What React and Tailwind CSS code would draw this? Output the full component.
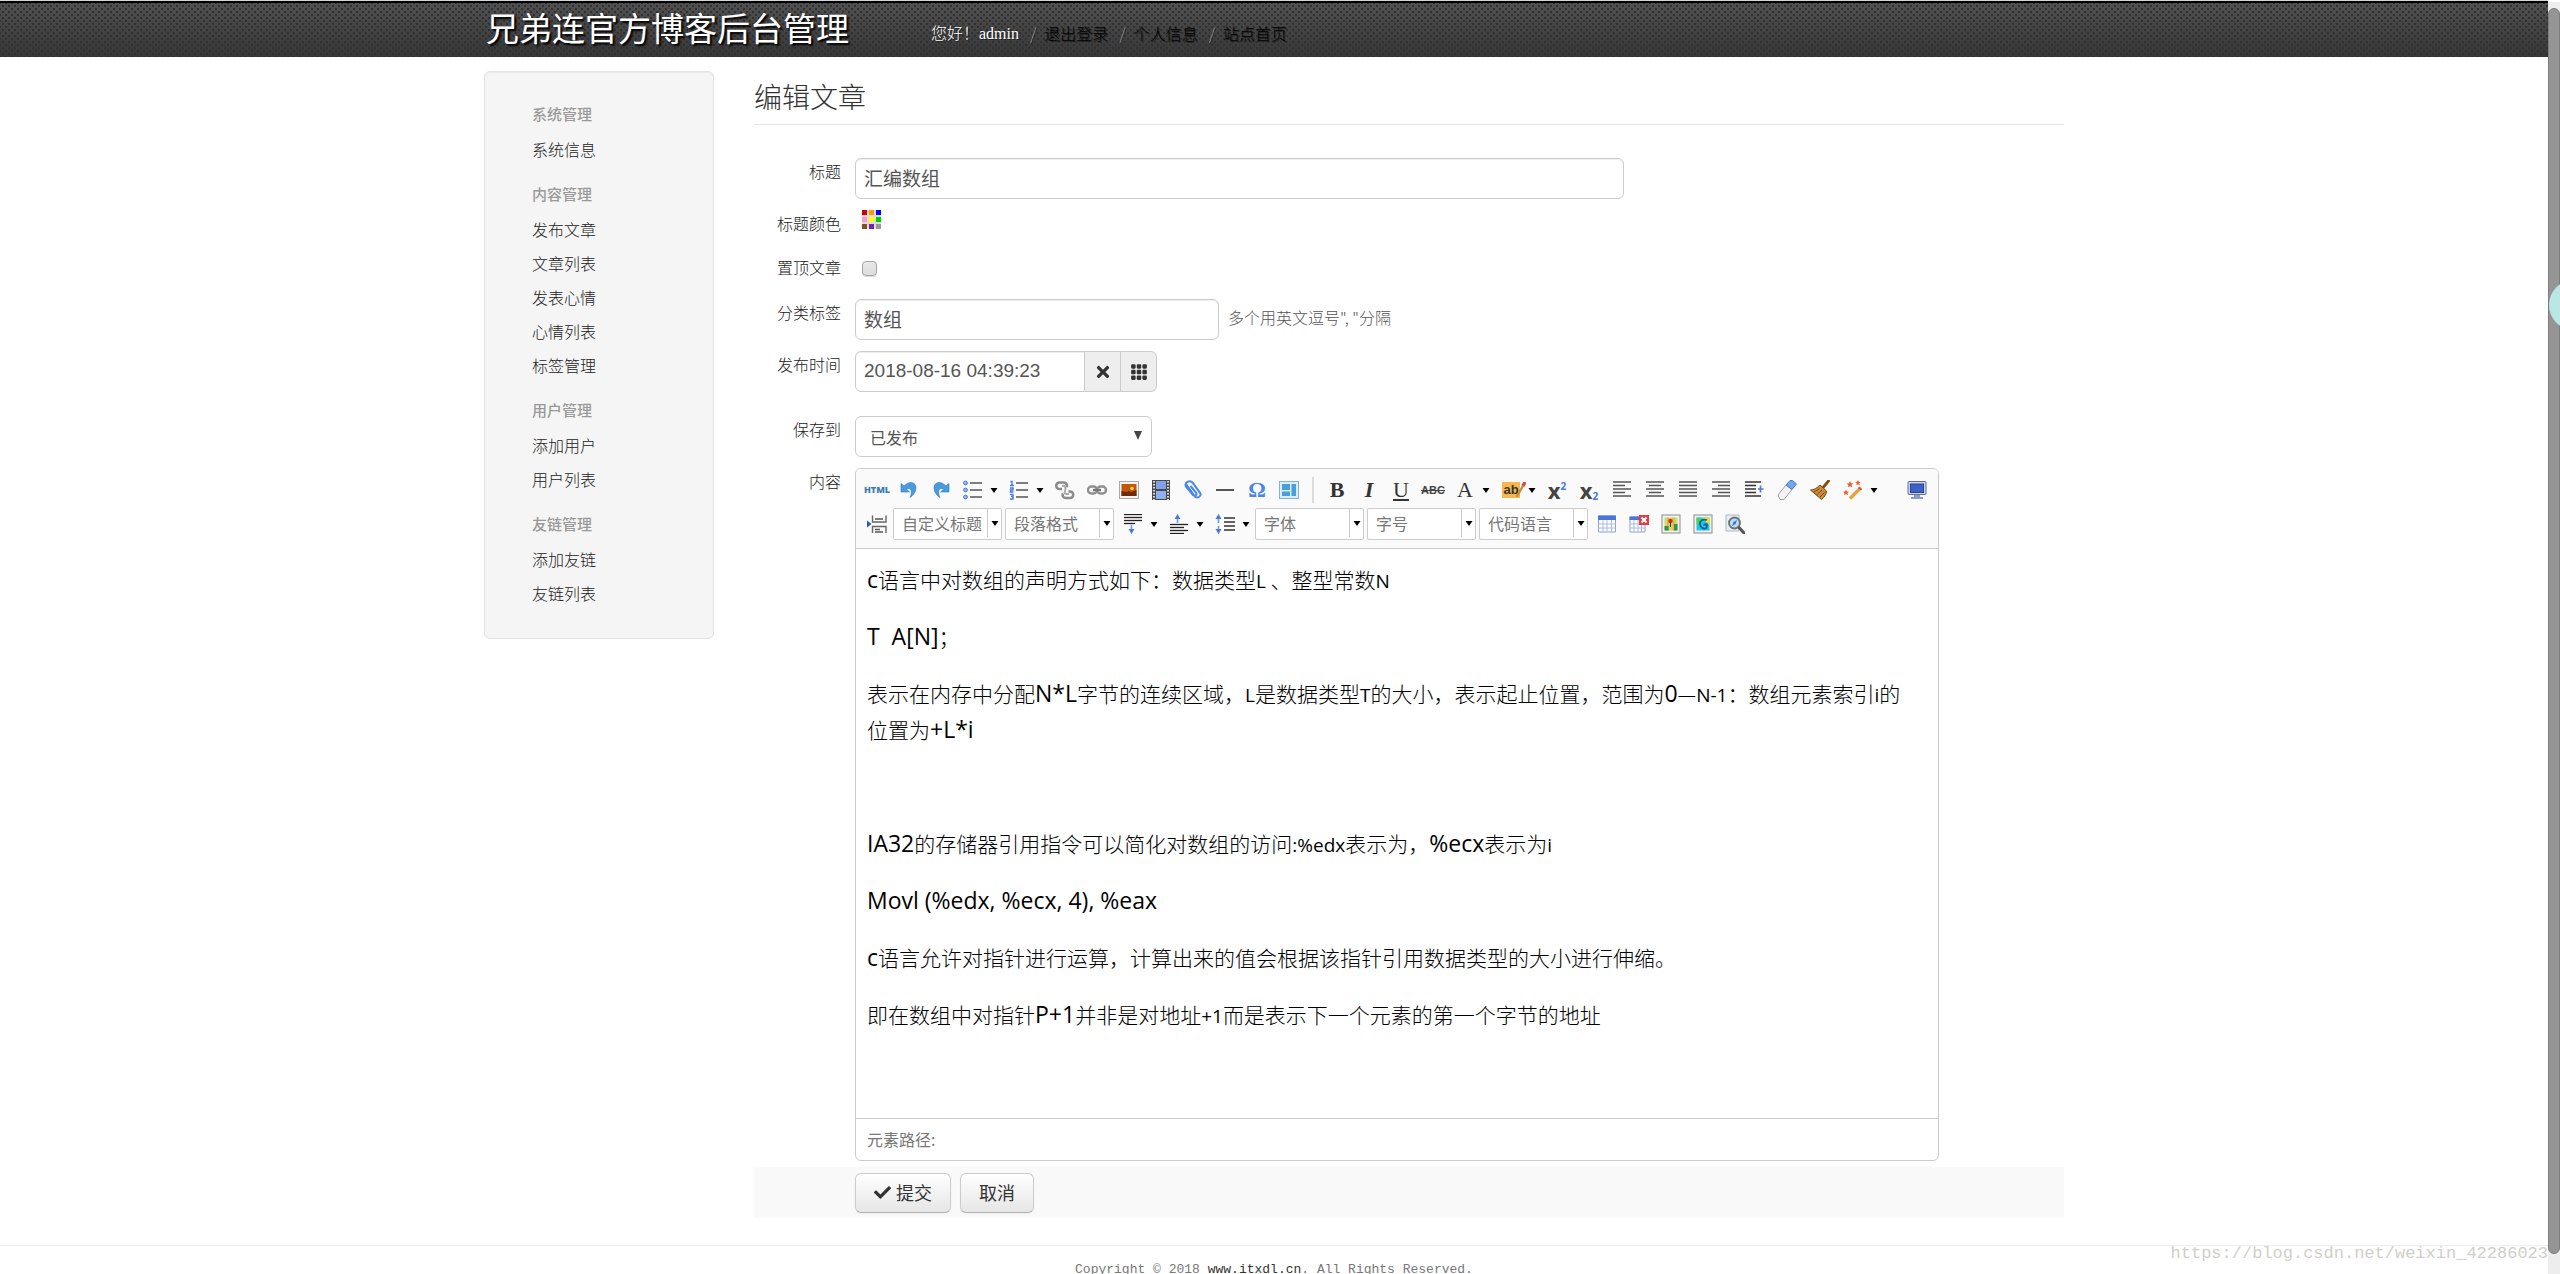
import { useState } from "react";
import { FaCheck, FaTimes } from "react-icons/fa";
import { BsGrid3X3GapFill } from "react-icons/bs";

const menu = [
  { title: "系统管理", items: ["系统信息"] },
  { title: "内容管理", items: ["发布文章", "文章列表", "发表心情", "心情列表", "标签管理"] },
  { title: "用户管理", items: ["添加用户", "用户列表"] },
  { title: "友链管理", items: ["添加友链", "友链列表"] },
];

const palette = ["#c00", "#f90", "#00f", "#f9c", "#ff0", "#0c0", "#85501a", "#72a", "#999"];

const lines = (ys, x1 = 1, x2 = 19, color = "#555", width = 1.6) =>
  ys.map((y) => <path key={y} d={`M${x1} ${y}H${x2}`} stroke={color} strokeWidth={width} />);

// Drawings for the toolbar buttons, all on a 20 x 20 grid
const icons = {
  undo: (
    <path d="M2 3.5v8.5h8.5L7.4 9.2c3.6-2 6.6.4 3.8 8.3C18 13 19.5 3 12 2.5c-2.7 0-5 1.3-6.8 3.5z" fill="#4a9bdc" stroke="#2d7cc0" strokeWidth=".6" />
  ),
  redo: (
    <path d="M18 3.5v8.5H9.5L12.6 9.2C9 7.2 6 9.6 8.8 17.5 2 13 .5 3 8 2.5c2.7 0 5 1.3 6.8 3.5z" fill="#4a9bdc" stroke="#2d7cc0" strokeWidth=".6" />
  ),
  ul: (
    <>
      {[3, 10, 17].map((y) => (
        <circle key={y} cx="2.5" cy={y} r="1.9" fill="#9ab8f5" stroke="#4a78e0" />
      ))}
      {lines([3, 10, 17], 7, 19)}
    </>
  ),
  ol: (
    <>
      <path d="M1.5 1.5H3v4M1 5.5h4M1 8h3v2H1.5v2h3M1 14.500h3v2H2h2v2.500H1" stroke="#4a78e0" strokeWidth="1.4" fill="none" />
      {lines([3, 10, 17], 7, 19)}
    </>
  ),
  unlink: (
    <g fill="none" stroke="#8b8b8b" strokeWidth="2.6">
      <path d="M7 9H4.500a2.800 2.800 0 0 1 0-6.500H9a3 3 0 0 1 2.500 4.500" />
      <path d="M13.500 11.500H15a2.800 2.800 0 0 1 0 6.500h-4.500a3 3 0 0 1-2.500-4.500" />
      <path d="M7 6c4-1 4 3 3 5s0 3.500 4 3" stroke="#aaa" strokeWidth="2" />
    </g>
  ),
  link: (
    <g fill="none" stroke="#8f8f8f" strokeWidth="2.4">
      <rect x="1" y="6.5" width="9" height="7" rx="3.5" />
      <rect x="10" y="6.5" width="9" height="7" rx="3.5" />
      <path d="M6 10h8" stroke="#777" />
    </g>
  ),
  image: (
    <>
      <rect x="0.5" y="1.5" width="19" height="17" fill="#f4f4f4" stroke="#aaa" />
      <rect x="2.5" y="4" width="15" height="12" fill="#c4560a" />
      <path d="M2.5 11l5 1 2-1 3 1 5-2v6h-15z" fill="#6e2c05" />
      <circle cx="13" cy="8.5" r="1.8" fill="#ffd24a" />
    </>
  ),
  film: (
    <>
      <rect x="1" y="0" width="18" height="20" fill="#4a4a4a" />
      <rect x="5" y="1" width="10" height="8" fill="#7f9fe8" />
      <rect x="5" y="11" width="10" height="8" fill="#8fb0f0" />
      <path d="M3 1v19M17 1v19" stroke="#ddd" strokeWidth="2" strokeDasharray="1.5 1.5" />
    </>
  ),
  clip: (
    <path d="M3 4l9 12.5c2.5 2.5 7-.5 5-3.7L9.500 2.500C6.500-.5 1 2.500 3 6.800l7 8.200c2 2 4.500-.5 3.200-2.200L7.500 6" fill="none" stroke="#4a86e8" strokeWidth="2" />
  ),
  hr: <path d="M1 10h18" stroke="#555" strokeWidth="1.8" />,
  layout: (
    <>
      <rect x="0.5" y="1.5" width="19" height="17" fill="#dcecf8" stroke="#7fb2d8" />
      <path d="M3 4h8v6H3zM3 11.5h8V16H3zM12.5 4H17v12h-4.5z" fill="#49a0d8" />
    </>
  ),
  left: (
    <>
      {lines([2, 9, 16], 1, 19)}
      {lines([5.5, 12.5], 1, 13)}
    </>
  ),
  center: (
    <>
      {lines([2, 9, 16], 1, 19)}
      {lines([5.5, 12.5], 4, 16)}
    </>
  ),
  justify: lines([2, 5.5, 9, 12.5, 16]),
  right: (
    <>
      {lines([2, 9, 16], 1, 19)}
      {lines([5.5, 12.5], 7, 19)}
    </>
  ),
  indent: (
    <>
      {lines([2, 16], 1, 17, "#333")}
      {lines([5.5, 9, 12.5], 1, 12, "#333")}
      <path d="M19.500 9H14M16.500 5.500v7" stroke="#4a78e0" strokeWidth="1.6" />
    </>
  ),
  eraser: (
    <g strokeLinejoin="round">
      <path d="M1 15L9 5l6 4.500L7 19.500H3z" fill="#f4f4f4" stroke="#9aa0a8" />
      <path d="M9 5l4-4.500h2.500L19.500 4l-4.500 5.500z" fill="#6fa8f0" stroke="#4a78c8" />
    </g>
  ),
  broom: (
    <>
      <path d="M18.500 1l-5 6" stroke="#8a4a12" strokeWidth="2.8" strokeLinecap="round" />
      <path d="M10 5l6.500 6c0 3-2 6-5 8.500L.5 10C4 10 7 8 10 5z" fill="#c98a3c" stroke="#7a4a14" />
      <path d="M3.500 12.500l6-4M6.500 15l5.500-5M9.500 17.500l5-5" stroke="#7a4a14" />
    </>
  ),
  wand: (
    <>
      <path d="M7 18.500L18 7.500" stroke="#e8a040" strokeWidth="3.4" />
      <path d="M15.500 7.500l3 2.500" stroke="#d04040" strokeWidth="1.5" />
      <path d="M7 1l1 2.200 2.300.3-1.700 1.500.5 2.300L7 6.200 4.900 7.300l.5-2.300L3.700 3.500 6 3.200zM15 0l.8 1.800 2 .2-1.500 1.200.4 2L15 4.200l-1.700 1 .4-2L12.200 2l2-.2zM3 9.500l.9 2 2.100.2-1.500 1.400.4 2.100L3 14.100l-1.900 1.100.4-2.100L0 11.700l2.100-.2z" fill="#e8602c" />
    </>
  ),
  monitor: (
    <>
      <rect x="1" y="1.5" width="18" height="13" rx="1" fill="#c9d3ea" stroke="#5f6f9c" />
      <rect x="3.5" y="4" width="13" height="8.5" fill="#3c62c8" stroke="#2a4490" />
      <path d="M7 15h6v2h3v2H4v-2h3z" fill="#8f9cc0" />
    </>
  ),
  pagebreak: (
    <>
      <path d="M0 6.500l4.500 3.500L0 13.500z" fill="#2b55c8" />
      <path d="M5.500 1.500v6.500H19V1.500M5.500 19v-6.500H19V19" fill="none" stroke="#666" strokeWidth="1.4" />
      <path d="M8 5h8M8 15.500h5M8 18h8" stroke="#555" strokeWidth="1.4" />
    </>
  ),
  spaceAfter: (
    <>
      {lines([0.5, 3.5, 6.5], 1, 19, "#222", 1.3)}
      {lines([9.5], 1, 12, "#222", 1.3)}
      <path d="M8.500 11v5" stroke="#6f9ae8" strokeWidth="1.6" />
      <path d="M5.500 15h6l-3 5z" fill="#4a78e0" />
    </>
  ),
  spaceBefore: (
    <>
      {lines([10.5, 16.5], 1, 19, "#222", 1.3)}
      {lines([13.5, 19.5], 1, 15, "#222", 1.3)}
      <path d="M8.500 4v5" stroke="#6f9ae8" strokeWidth="1.6" />
      <path d="M5.500 5h6l-3-5z" fill="#4a78e0" />
    </>
  ),
  lineHeight: (
    <>
      {lines([4, 8, 12, 16], 9, 20, "#222", 1.4)}
      <path d="M3.500 4v5M3.500 12v4" stroke="#6f9ae8" strokeWidth="1.6" />
      <path d="M.5 5h6l-3-5zM.5 15h6l-3 5z" fill="#4a78e0" />
    </>
  ),
  table: (
    <>
      <path d="M1.500 2h17v16h-17z" fill="#fff" stroke="#8aa2d8" />
      <path d="M1 1.500h18V6H1z" fill="#4a74dc" />
      <path d="M1.500 10h17M1.500 14h17M6 6v12M10 6v12M14.500 6v12" stroke="#a9bbe4" />
    </>
  ),
  tableDelete: (
    <>
      <path d="M1 3h15v15H1z" fill="#fff" stroke="#8aa2d8" />
      <path d="M.5 2.500H16V6H.5z" fill="#4a74dc" />
      <path d="M1 10h15M1 14h15M5 6v12M9 6v12M12.500 6v12" stroke="#a9bbe4" />
      <rect x="10" y="1" width="10" height="10" fill="#e03c3c" />
      <path d="M12.500 3.500l5 5M17.500 3.500l-5 5" stroke="#fff" strokeWidth="2" />
    </>
  ),
  map: (
    <>
      <rect x="1" y="1" width="18" height="18" fill="#f2f2f2" stroke="#8a8a8a" />
      <rect x="3.5" y="3.5" width="13" height="13" fill="#c8dc78" />
      <path d="M7 3.500v13M12.500 3.500v13" stroke="#e8b43c" strokeWidth="2" />
      <path d="M3.500 12h4v4.500h-4zM13 10h3.500v6.500H13z" fill="#3c8c50" />
      <circle cx="9.5" cy="7" r="2.2" fill="#d82c1c" />
      <path d="M9.500 8v5" stroke="#333" />
    </>
  ),
  gmap: (
    <>
      <rect x="1" y="1" width="18" height="18" fill="#f2f2f2" stroke="#8a8a8a" />
      <rect x="3.5" y="3.5" width="13" height="13" fill="#18c8f0" />
      <path d="M9 3.500h7.500v8z" fill="#f0e020" />
      <path d="M3.500 3.500h4v7h-4z" fill="#50d050" />
      <path d="M14 6C9 4.500 6.500 7 7 10.500s4 5 6.500 3.500l.5-3.500h-3.500" fill="none" stroke="#1c5c90" strokeWidth="1.8" />
    </>
  ),
  preview: (
    <>
      <path d="M1 1h13v16H1z" fill="#e8eef4" stroke="#b0b8c4" />
      <circle cx="9.5" cy="9" r="5.5" fill="#b8dcf4" stroke="#6a7078" strokeWidth="1.8" />
      <path d="M12 6l-1.500 4L7 12l1.500-4z" fill="#3c78b8" />
      <path d="M14 13.500l5 5.500" stroke="#555" strokeWidth="3" strokeLinecap="round" />
    </>
  ),
};

const glyph = "font-['Liberation_Serif',serif] text-[22px] leading-none text-[#333]";

function Icon({ name }) {
  return (
    <svg viewBox="0 0 20 20" className="h-5 w-5" fill="none" aria-hidden="true">
      {icons[name]}
    </svg>
  );
}

function Arrow() {
  return (
    <svg viewBox="0 0 8 5" className="h-[5px] w-2 shrink-0" aria-hidden="true">
      <path d="M.5 0h7L4 5z" fill="#000" />
    </svg>
  );
}

function Tool({ name, label, arrow, children }) {
  return (
    <button type="button" title={label} aria-label={label} className="flex h-[34px] shrink-0 items-center">
      <span className="flex w-8 items-center justify-center">{children || <Icon name={name} />}</span>
      {arrow && (
        <span className="flex w-3.5 items-center justify-start pl-px">
          <Arrow />
        </span>
      )}
    </button>
  );
}

function Combo({ label }) {
  return (
    <div className="mr-[3px] flex h-8 w-[109px] shrink-0 items-center rounded-xs border border-[#ccc] bg-white">
      <select aria-label={label} className="h-7 min-w-0 flex-1 appearance-none pb-0.5 pl-2 text-base font-normal text-[#777] outline-none">
        <option>{label}</option>
      </select>
      <span className="mb-0.5 flex h-7 w-3.5 items-center justify-center border-l border-[#ccc]">
        <Arrow />
      </span>
    </div>
  );
}

function Row({ label, id, className = "mb-[11px]", children }) {
  return (
    <div className={`flex items-start gap-3.5 ${className}`}>
      <label htmlFor={id} className="w-[87px] shrink-0 text-right leading-[26px] text-[#222]">
        {label}
      </label>
      <div className="min-w-0 flex-1">{children}</div>
    </div>
  );
}

const field =
  "h-[41px] border border-[#ccc] bg-white px-2 pb-0.5 text-[19px] font-normal text-[#555] outline-none shadow-[inset_0_1px_1px_rgba(0,0,0,0.075)] font-['Liberation_Sans','Noto_Sans_CJK_SC',sans-serif]";
const addon = "flex h-[41px] w-[37px] -ml-px items-center justify-center border border-[#ccc] bg-[#eee] text-[#333]";
const btn =
  "flex h-10 items-center rounded-md border border-[#ccc] border-b-[#b3b3b3] bg-linear-to-b from-white to-[#e6e6e6] px-[18px] pb-0.5 text-lg font-normal text-[#333] shadow-[0_1px_2px_rgba(0,0,0,0.05)]";

function Header() {
  return (
    <header className="border-t border-[#d0d4d8]">
      <div className="h-14 border-t-2 border-black bg-[radial-gradient(circle,#303030_1px,transparent_1px),radial-gradient(circle,#303030_1px,transparent_1px),linear-gradient(#505050,#363636)] bg-[length:6px_6px,6px_6px,100%_100%] bg-[position:0_0,3px_3px,0_0]">
        <div className="mx-auto flex h-full max-w-[1580px] items-center">
          <h1 className="pb-1.5 pl-0.5 text-[33px] leading-none font-normal text-white [text-shadow:2px_2px_2px_#000]">兄弟连官方博客后台管理</h1>
          <div className="flex items-center gap-[11px] pt-1.5 pl-[82px] text-base leading-6 text-[#999] [text-shadow:1px_1px_0_#222]">
            <span className="text-white">
              您好！<span className="font-['Liberation_Serif',serif]">admin</span>
            </span>
            {["退出登录", "个人信息", "站点首页"].map((item) => (
              <span key={item} className="flex gap-2">
                / <a href="#" className="text-black">{item}</a>
              </span>
            ))}
          </div>
        </div>
      </div>
    </header>
  );
}

function Sidebar() {
  return (
    <nav className="w-[230px] shrink-0 rounded-md border border-[#e3e3e3] bg-[#f5f5f5] pt-3.5 pb-7 pl-[47px] shadow-[inset_0_1px_1px_rgba(0,0,0,0.05)]">
      {menu.map((group) => (
        <section key={group.title}>
          <h3 className="pt-2.5 text-[15px] leading-9 font-medium text-[#999]">{group.title}</h3>
          <ul>
            {group.items.map((item) => (
              <li key={item} className="leading-[34px]">
                <a href="#" className="text-[#222]">{item}</a>
              </li>
            ))}
          </ul>
        </section>
      ))}
    </nav>
  );
}

function Toolbar() {
  return (
    <div className="border-b border-[#ccc] bg-[#fafafa] px-[5px] pt-1 pb-[7px]">
      <div className="flex">
        <Tool label="HTML"><span className="font-['Noto_Sans'] text-[9px] font-black text-[#3a7cb0]">HTML</span></Tool>
        <Tool name="undo" label="撤销" />
        <Tool name="redo" label="重做" />
        <Tool name="ul" label="无序列表" arrow />
        <Tool name="ol" label="有序列表" arrow />
        <Tool name="unlink" label="取消链接" />
        <Tool name="link" label="超链接" />
        <Tool name="image" label="图片" />
        <Tool name="film" label="视频" />
        <Tool name="clip" label="附件" />
        <Tool name="hr" label="分隔线" />
        <Tool label="特殊字符"><span className="font-['Liberation_Serif'] text-[22px] leading-none font-bold text-[#4a86e8]">Ω</span></Tool>
        <Tool name="layout" label="模板" />
        <span className="mx-[7px] my-1 w-0.5 bg-[#ddd]" />
        <Tool label="加粗"><span className={`${glyph} font-bold`}>B</span></Tool>
        <Tool label="斜体"><span className={`${glyph} font-bold italic`}>I</span></Tool>
        <Tool label="下划线"><span className={`${glyph} font-normal underline`}>U</span></Tool>
        <Tool label="删除线"><span className="font-['Liberation_Sans'] text-[11px] font-semibold text-[#444] line-through">ABC</span></Tool>
        <Tool label="字体颜色" arrow><span className={`${glyph} font-normal`}>A</span></Tool>
        <Tool label="背景色" arrow>
          <span className="relative bg-[#f6b84c] px-px font-['Liberation_Sans'] text-[13px] leading-4 font-bold text-[#333]">
            ab
            <svg viewBox="0 0 10 14" className="absolute top-0 -right-1.5 h-4 w-3" aria-hidden="true">
              <path d="M8.500 2L2 13" stroke="#c98a3c" strokeWidth="2" />
              <path d="M9.500 0L7.500 3.500" stroke="#e04848" strokeWidth="3" />
            </svg>
          </span>
        </Tool>
        <Tool label="上标">
          <span className="flex items-start font-['Noto_Sans'] text-[22px] leading-5 font-bold text-[#444]">x<span className="text-[10px] leading-3 text-[#4a78e0]">2</span></span>
        </Tool>
        <Tool label="下标">
          <span className="flex items-end font-['Noto_Sans'] text-[22px] leading-5 font-bold text-[#444]">x<span className="text-[10px] leading-2 text-[#4a78e0]">2</span></span>
        </Tool>
        <div className="flex gap-px pl-px">
          <Tool name="left" label="居左对齐" />
          <Tool name="center" label="居中对齐" />
          <Tool name="justify" label="两端对齐" />
          <Tool name="right" label="居右对齐" />
          <Tool name="indent" label="首行缩进" />
          <Tool name="eraser" label="清除格式" />
          <Tool name="broom" label="格式刷" />
          <Tool name="wand" label="自动排版" arrow />
        </div>
        <span className="flex-1" />
        <Tool name="monitor" label="全屏" />
      </div>
      <div className="flex items-center">
        <Tool name="pagebreak" label="分页" />
        <Combo label="自定义标题" />
        <Combo label="段落格式" />
        <Tool name="spaceAfter" label="段后距" arrow />
        <Tool name="spaceBefore" label="段前距" arrow />
        <Tool name="lineHeight" label="行间距" arrow />
        <Combo label="字体" />
        <Combo label="字号" />
        <Combo label="代码语言" />
        <Tool name="table" label="插入表格" />
        <Tool name="tableDelete" label="删除表格" />
        <Tool name="map" label="百度地图" />
        <Tool name="gmap" label="Google地图" />
        <Tool name="preview" label="预览" />
      </div>
    </div>
  );
}

// Larger and smaller Latin runs inside the article text
const B = ({ children }) => <span className="font-['Open_Sans',sans-serif] text-[23px] font-normal">{children}</span>;
const S = ({ children }) => <span className="font-['Open_Sans',sans-serif] text-[19px] font-normal">{children}</span>;

function Article() {
  return (
    <div className="flex min-h-[569px] flex-col gap-[21px] pt-3 pr-7 pl-[11px] text-[21px] leading-9 text-black [&_span]:leading-none">
      <p><B>c</B>语言中对数组的声明方式如下：数据类型<S>L</S> 、整型常数<S>N</S></p>
      <p className="whitespace-pre"><B>T  A[N]</B>；</p>
      <p>表示在内存中分配<B>N*L</B>字节的连续区域，<S>L</S>是数据类型<S>T</S>的大小，表示起止位置，范围为<B>0</B>—<S>N-1</S>：数组元素索引<S>i</S>的位置为<B>+L*i</B></p>
      <p>&nbsp;</p>
      <p><B>IA32</B>的存储器引用指令可以简化对数组的访问<S>:%edx</S>表示为，<B>%ecx</B>表示为<S>i</S></p>
      <p><B>Movl (%edx, %ecx, 4), %eax</B></p>
      <p><B>c</B>语言允许对指针进行运算，计算出来的值会根据该指针引用数据类型的大小进行伸缩。</p>
      <p>即在数组中对指针<B>P+1</B>并非是对地址<S>+1</S>而是表示下一个元素的第一个字节的地址</p>
    </div>
  );
}

function PostForm() {
  const [title, setTitle] = useState("汇编数组");
  const [tags, setTags] = useState("数组");
  const [time, setTime] = useState("2018-08-16 04:39:23");

  return (
    <form className="min-w-0 flex-1" onSubmit={(e) => e.preventDefault()}>
      <h2 className="mb-[33px] border-b border-[#e5e5e5] pb-0.5 text-[28px] leading-[51px]">编辑文章</h2>
      <Row label="标题" id="title">
        <input id="title" value={title} onChange={(e) => setTitle(e.target.value)} className={`${field} block w-full max-w-[769px] rounded-md`} />
      </Row>
      <Row label="标题颜色" id="color">
        <button id="color" type="button" className="ml-[7px] block h-[33px] pb-[14px]" aria-label="标题颜色">
          <span className="grid grid-cols-3 gap-0.5 bg-[#ddd]">
            {palette.map((c) => (
              <span key={c} className="h-[5px] w-[5px]" style={{ background: c }} />
            ))}
          </span>
        </button>
      </Row>
      <Row label="置顶文章" id="top">
        <div className="flex h-[34px] items-start pt-[7px] pl-[7px]">
          <input id="top" type="checkbox" className="h-[15px] w-[15px] appearance-none rounded-sm border border-[#a5a5a5] bg-linear-to-b from-[#e8e8e8] to-[#dcdcdc] shadow-[0_1px_1px_rgba(0,0,0,0.15)]" />
        </div>
      </Row>
      <Row label="分类标签" id="tags">
        <div className="flex items-center gap-[9px]">
          <input id="tags" value={tags} onChange={(e) => setTags(e.target.value)} className={`${field} w-[364px] rounded-md`} />
          <span className="pb-1.5 text-[#555]">多个用英文逗号", "分隔</span>
        </div>
      </Row>
      <Row label="发布时间" id="time" className="mb-6">
        <div className="flex">
          <input id="time" value={time} onChange={(e) => setTime(e.target.value)} className={`${field} w-[230px] rounded-l-md`} />
          <button type="button" aria-label="清空" className={addon}><FaTimes className="h-[18px] w-[18px]" /></button>
          <button type="button" aria-label="选择时间" className={`${addon} rounded-r-md`}><BsGrid3X3GapFill className="h-[18px] w-[18px]" /></button>
        </div>
      </Row>
      <Row label="保存到" id="status">
        <div className="relative w-[297px]">
          <select id="status" className="block h-[41px] w-full appearance-none rounded-md border border-[#ccc] bg-white px-3.5 text-base font-normal text-[#555]">
            <option>已发布</option>
            <option>草稿箱</option>
          </select>
          <svg viewBox="0 0 8 9" className="pointer-events-none absolute top-[15px] right-2.5 h-[9px] w-2" aria-hidden="true">
            <path d="M0 0h8L4 9z" fill="#444" />
          </svg>
        </div>
      </Row>
      <Row label="内容" className="mb-1.5">
        <div className="max-w-[1084px] overflow-hidden rounded-md border border-[#ccc]">
          <Toolbar />
          <Article />
          <div className="border-t border-[#ccc] px-[11px] leading-[41px] font-normal text-[#777]">元素路径:</div>
        </div>
      </Row>
      <div className="flex gap-[9px] bg-[#f9f9f9] pt-1.5 pb-[5px] pl-[101px]">
        <button type="submit" className={btn}><FaCheck className="mr-[5px] h-[17px] w-[17px]" />提交</button>
        <button type="reset" className={btn}>取消</button>
      </div>
    </form>
  );
}

export default function App() {
  return (
    <div className="relative flex h-screen overflow-hidden bg-white font-['Noto_Sans_CJK_SC',sans-serif] text-base font-light text-[#333]">
      <div className="min-w-0 flex-1 overflow-hidden">
        <Header />
        <div className="mx-auto mt-3.5 flex max-w-[1580px] items-start gap-10">
          <Sidebar />
          <PostForm />
        </div>
        <footer className="mt-[27px] border-t border-[#eee] pt-3.5 text-center font-['Liberation_Mono',monospace] text-[13px] leading-5 text-[#777]">
          Copyright © 2018 <a href="#" className="text-[#333]">www.itxdl.cn</a>. All Rights Reserved.
        </footer>
      </div>
      {/* page scroll bar */}
      <div className="mt-0.5 w-3 shrink-0 bg-[#ededed] pt-1.5 pb-5">
        <div className="h-full rounded-full border border-[#7d7d7d] bg-[#959595]" />
      </div>
      <div className="absolute top-[280px] -right-[39px] h-[50px] w-[50px] rounded-full bg-[#b9e8e4]" />
      <div className="absolute right-3 bottom-2 font-['Liberation_Mono',monospace] text-[17px] leading-6 text-[#d0d0ca]">
        https://blog.csdn.net/weixin_42286023
      </div>
    </div>
  );
}
